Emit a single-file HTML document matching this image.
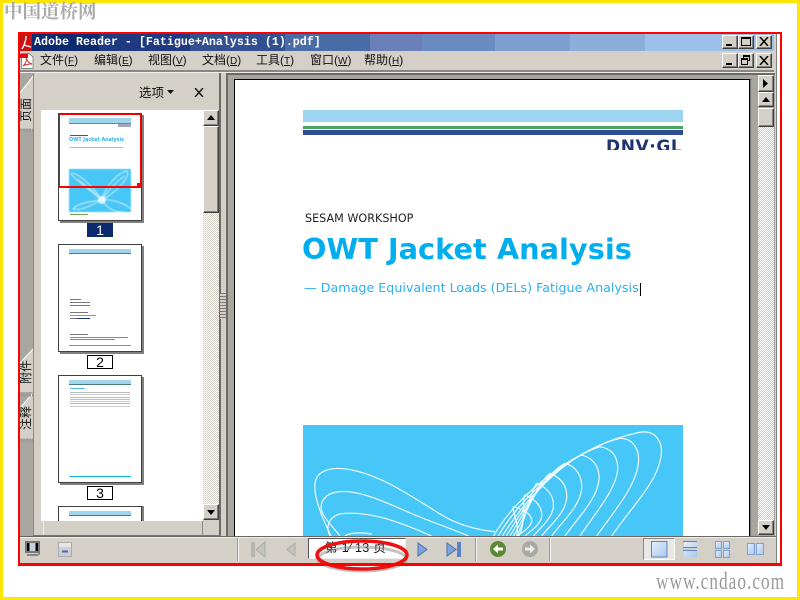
<!DOCTYPE html>
<html><head><meta charset="utf-8"><style>
html,body{margin:0;padding:0}
body{width:800px;height:600px;position:relative;overflow:hidden;background:#fff;font-family:"Liberation Sans","Noto Sans CJK SC",sans-serif}
div,span.a,svg.a{position:absolute;box-sizing:border-box}
.t{white-space:nowrap;line-height:1}
.btn{background:#d4d0c8;border:1px solid;border-color:#fff #404040 #404040 #fff;box-shadow:inset -1px -1px 0 #808080}
.chk{background-color:#fff;background-image:linear-gradient(45deg,#d4d0c8 25%,transparent 25%,transparent 75%,#d4d0c8 75%),linear-gradient(45deg,#d4d0c8 25%,transparent 25%,transparent 75%,#d4d0c8 75%);background-size:2px 2px;background-position:0 0,1px 1px}
.m{font-size:12px;color:#111;top:54px;font-family:"Liberation Sans","WenQuanYi Zen Hei","Noto Sans CJK SC",sans-serif}
.m u{font-size:10px}
.thumb{left:58px;width:84px;background:#fff;border:1px solid #404040;box-shadow:2px 2px 0 #808080}
.lab{left:87px;width:26px;height:14px;border:1px solid #000;background:#fff;font-size:14px;text-align:center;line-height:12px;color:#000}
.vt{left:6px;width:40px;height:14px;text-align:center;font-size:12px;color:#111;font-family:"WenQuanYi Zen Hei","Noto Sans CJK SC",sans-serif;line-height:14px;white-space:nowrap;transform:rotate(-90deg)}
</style></head><body>
<div style="left:0;top:0;width:800px;height:600px;border:3px solid #ffe600"></div>
<div class="t" style="left:4px;top:2px;font-size:18.5px;font-weight:700;color:#aaa;font-family:'Noto Serif CJK SC',serif">中国道桥网</div>
<div class="t" style="left:656px;top:570px;font-size:24px;color:#999;font-family:'Liberation Serif',serif;transform:scaleX(.72);transform-origin:0 0;letter-spacing:1.4px">www.cndao.com</div>

<!-- window -->
<div style="left:20px;top:34px;width:757px;height:530px;background:#d4d0c8;border-right:1px solid #808080;border-bottom:2px solid #808080"></div>
<!-- title -->
<div style="left:20px;top:34px;width:754px;height:17px;background:linear-gradient(90deg,#0d2a6e 0,#0d2a6e 79px,#1f3a80 79px,#1f3a80 170px,#324f90 170px,#324f90 265px,#4a6ca6 265px,#4a6ca6 350px,#6b7fb8 350px,#6b7fb8 402px,#6a8bc0 402px,#6a8bc0 475px,#7f9fd0 475px,#7f9fd0 550px,#8daed9 550px,#8daed9 625px,#9cc0ea 625px)"></div>
<svg class="a" style="left:20px;top:34px" width="12" height="17" viewBox="0 0 12 17"><rect width="12" height="17" fill="#c11"/><path d="M2 15C5 10 6 6 6 2M4 11L11 13" stroke="#fff" stroke-width="1.4" fill="none"/></svg>
<div class="t" style="left:34px;top:37px;font:bold 11.67px/1 'Liberation Mono',monospace;color:#fff">Adobe Reader - [Fatigue+Analysis (1).pdf]</div>
<div class="btn" style="left:722px;top:35px;width:16px;height:14px"></div>
<div style="left:726px;top:44px;width:6px;height:2px;background:#000"></div>
<div class="btn" style="left:738px;top:35px;width:16px;height:14px"></div>
<div style="left:741px;top:37px;width:10px;height:9px;border:1px solid #000;border-top-width:2px"></div>
<div class="btn" style="left:756px;top:35px;width:16px;height:14px"></div>
<svg class="a" style="left:759px;top:37px" width="10" height="9"><path d="M1 0L9 9M9 0L1 9" stroke="#000" stroke-width="1.5"/></svg>
<!-- menu -->
<svg class="a" style="left:20px;top:53px" width="14" height="16"><path d="M1.500 .5H9L13 4V15.500H1.500Z" fill="#fff" stroke="#888"/><path d="M0 1H8V5H0Z" fill="#d11"/><path d="M3 13C6 10 7 7 6 5C8 9 9 10 12 11C9 11 6 11 3 13Z" fill="none" stroke="#c33"/></svg>
<div class="t m" style="left:40px">文件(<u>F</u>)</div>
<div class="t m" style="left:94px">编辑(<u>E</u>)</div>
<div class="t m" style="left:148px">视图(<u>V</u>)</div>
<div class="t m" style="left:202px">文档(<u>D</u>)</div>
<div class="t m" style="left:256px">工具(<u>T</u>)</div>
<div class="t m" style="left:310px">窗口(<u>W</u>)</div>
<div class="t m" style="left:364px">帮助(<u>H</u>)</div>
<div class="btn" style="left:722px;top:53px;width:16px;height:15px"></div>
<div style="left:726px;top:63px;width:6px;height:2px;background:#000"></div>
<div class="btn" style="left:738px;top:53px;width:16px;height:15px"></div>
<div style="left:743px;top:55px;width:7px;height:6px;border:1px solid #000;border-top-width:2px"></div>
<div style="left:741px;top:58px;width:7px;height:7px;border:1px solid #000;border-top-width:2px;background:#d4d0c8"></div>
<div class="btn" style="left:756px;top:53px;width:16px;height:15px"></div>
<svg class="a" style="left:759px;top:56px" width="10" height="9"><path d="M1 0L9 9M9 0L1 9" stroke="#000" stroke-width="1.500"/></svg>
<div style="left:20px;top:70px;width:754px;height:2px;background:#8a8880"></div>
<div style="left:20px;top:72px;width:754px;height:1px;background:#eee"></div>

<!-- left strip -->
<div style="left:20px;top:73px;width:13px;height:463px;background:#a8a69f"></div>
<svg class="a" style="left:20px;top:73px" width="14" height="60"><path d="M0 20L14 2V56H0Z" fill="#d4d0c8"/><path d="M0 20L14 2" stroke="#fff"/><path d="M0 57H13" stroke="#999" stroke-dasharray="2 1" stroke-width="3"/></svg>
<svg class="a" style="left:20px;top:345px" width="14" height="100"><path d="M0 18L14 3V47H0Z" fill="#d4d0c8"/><path d="M0 63L14 47V94H0Z" fill="#d4d0c8"/><path d="M0 18L14 3M0 63L14 47" stroke="#fff"/><path d="M0 50H13M0 95H13" stroke="#999" stroke-dasharray="2 1" stroke-width="3"/></svg>
<div class="t vt" style="top:103px">页面</div>
<div class="t vt" style="top:365px">附件</div>
<div class="t vt" style="top:411px">注释</div>
<!-- left panel -->
<div style="left:33px;top:73px;width:187px;height:463px;background:#d4d0c8;border-left:1px solid #8a8880"></div>
<div style="left:219px;top:73px;width:2px;height:463px;background:#6b6a66"></div>
<div class="t" style="left:139px;top:86px;font-size:12.500px;color:#111;font-family:'WenQuanYi Zen Hei','Noto Sans CJK SC',sans-serif">选项</div>
<svg class="a" style="left:167px;top:90px" width="8" height="5"><path d="M0 0H7L3.500 4Z" fill="#111"/></svg>
<svg class="a" style="left:194px;top:88px" width="10" height="9"><path d="M1 0L9 9M9 0L1 9" stroke="#111" stroke-width="1.400"/></svg>
<div style="left:41px;top:110px;width:162px;height:411px;background:#fff;overflow:hidden"></div>
<div class="chk" style="left:203px;top:110px;width:16px;height:410px"></div>
<div class="btn" style="left:203px;top:110px;width:16px;height:16px"></div>
<svg class="a" style="left:207px;top:115px" width="9" height="5"><path d="M0 5H8L4 0Z"/></svg>
<div class="btn" style="left:203px;top:126px;width:16px;height:87px"></div>
<div class="btn" style="left:203px;top:504px;width:16px;height:16px"></div>
<svg class="a" style="left:207px;top:510px" width="9" height="5"><path d="M0 0H8L4 5Z"/></svg>
<div style="left:43px;top:521px;width:160px;height:15px;background:#d4d0c8;border-right:1px solid #888;border-left:1px solid #eee"></div>
<div style="left:33px;top:535px;width:187px;height:1px;background:#777"></div>

<!-- thumb 1 -->
<div class="thumb" style="top:113px;height:108px"></div>
<div style="left:69px;top:118px;width:62px;height:5px;background:#9fd6ee"></div>
<div style="left:69px;top:123px;width:62px;height:1px;background:#4d9a7d"></div>
<div style="left:118px;top:124px;width:13px;height:3px;background:#a4a8ba"></div>
<div style="left:70px;top:135px;width:18px;height:1px;background:#555"></div>
<div class="t" style="left:69px;top:139px;font:bold 4.800px/1 'DejaVu Sans',sans-serif;color:#2ab3ee">OWT Jacket Analysis</div>
<div style="left:70px;top:147px;width:53px;height:1px;background:#7fcdf2"></div>
<svg class="a" style="left:69px;top:169px;filter:blur(.4px)" width="62" height="43" viewBox="0 0 62 43"><rect width="62" height="43" fill="#48c6f5"/><g fill="none" stroke="#b5e6fa" stroke-width="1.200"><path d="M33 31C24 24 6 10 2 5C4 1 20 12 33 31ZM33 31C36 18 48 4 58 2C62 8 46 24 33 31ZM33 31C36 36 42 43 54 43M33 31C26 34 14 42 4 40C8 34 24 32 33 31Z"/><path d="M33 31C26 24 14 14 8 10M33 31C40 20 50 10 56 7M33 31C42 30 56 34 62 40"/></g><circle cx="33" cy="31" r="4" fill="#fff" opacity=".75"/></svg>
<div style="left:70px;top:214px;width:18px;height:1px;background:#7a9a4a"></div>
<div style="left:59px;top:114px;width:82px;height:74px;border:1px solid #f00;border-width:1px 1px 2px 1px"></div>
<div style="left:137px;top:183px;width:4px;height:4px;background:#f00"></div>
<div class="lab" style="top:223px;background:#0d2a6e;color:#fff;border-color:#0d2a6e">1</div>

<!-- thumb 2 -->
<div class="thumb" style="top:244px;height:108px"></div>
<div style="left:69px;top:249px;width:62px;height:4px;background:#9fd6ee"></div>
<div style="left:69px;top:253px;width:62px;height:1px;background:#4d7a7d"></div>
<div style="left:70px;top:299px;width:11px;height:1px;background:#777"></div>
<div style="left:70px;top:302px;width:20px;height:1px;background:#777"></div>
<div style="left:70px;top:305px;width:20px;height:1px;background:#777"></div>
<div style="left:70px;top:312px;width:18px;height:1px;background:#777"></div>
<div style="left:70px;top:315px;width:26px;height:1px;background:#7a9ad0"></div>
<div style="left:70px;top:318px;width:10px;height:1px;background:#777"></div>
<div style="left:77px;top:318px;width:13px;height:1px;background:#1c3a8c"></div>
<div style="left:70px;top:334px;width:18px;height:1px;background:#777"></div>
<div style="left:70px;top:337px;width:58px;height:1px;background:#888"></div>
<div style="left:70px;top:339px;width:45px;height:1px;background:#888"></div>
<div style="left:69px;top:345px;width:62px;height:1px;background:#2aa8e8"></div>
<div class="lab" style="top:355px">2</div>

<!-- thumb 3 -->
<div class="thumb" style="top:375px;height:108px"></div>
<div style="left:69px;top:380px;width:62px;height:4px;background:#9fd6ee"></div>
<div style="left:69px;top:384px;width:62px;height:1px;background:#4d7a7d"></div>
<div style="left:70px;top:388px;width:15px;height:1px;background:#4cb8ee"></div>
<div style="left:70px;top:392px;width:60px;height:1px;background:#bbb"></div>
<div style="left:70px;top:394px;width:60px;height:1px;background:#ccc"></div>
<div style="left:70px;top:397px;width:60px;height:1px;background:#bbb"></div>
<div style="left:70px;top:399px;width:60px;height:1px;background:#bbb"></div>
<div style="left:70px;top:401px;width:60px;height:1px;background:#ccc"></div>
<div style="left:70px;top:403px;width:60px;height:1px;background:#bbb"></div>
<div style="left:70px;top:406px;width:60px;height:1px;background:#ccc"></div>
<div style="left:69px;top:476px;width:62px;height:1px;background:#12b4f0"></div>
<div class="lab" style="top:486px">3</div>
<!-- thumb 4 -->
<div style="left:58px;top:506px;width:84px;height:15px;background:#fff;border:1px solid #404040;border-bottom:0;box-shadow:2px 0 0 #808080"></div>
<div style="left:69px;top:511px;width:62px;height:4px;background:#9fd6ee"></div>
<div style="left:69px;top:515px;width:62px;height:1px;background:#4d7a7d"></div>

<!-- splitter -->
<div style="left:221px;top:73px;width:5px;height:463px;background:#d4d0c8"></div>
<div style="left:220px;top:293px;width:6px;height:26px;background:repeating-linear-gradient(180deg,#777 0,#777 1px,#d4d0c8 1px,#d4d0c8 3px)"></div>

<!-- doc area -->
<div style="left:226px;top:73px;width:549px;height:463px;background:#a8a69f;border-left:2px solid #6b6a66;border-top:2px solid #6b6a66"></div>
<div style="left:234px;top:79px;width:516px;height:457px;background:#fff;border-top:1px solid #000;border-left:1px solid #000;border-right:1px solid #000;box-shadow:2px 0 0 #777"></div>
<div style="left:303px;top:110px;width:380px;height:12px;background:#9ed6f1"></div>
<div style="left:303px;top:125.500px;width:380px;height:3px;background:#4ba35f"></div>
<div style="left:303px;top:130px;width:380px;height:5px;background:#2e4c90"></div>
<div style="left:600px;top:139px;width:83px;height:11px;overflow:hidden"><div class="t" style="left:6px;top:0;font:bold 17px/1 'DejaVu Sans',sans-serif;color:#1d3371;letter-spacing:.6px;white-space:nowrap">DNV·GL</div></div>
<div class="t" style="left:305px;top:213px;font:11.200px/1 'DejaVu Sans',sans-serif;color:#222;">SESAM WORKSHOP</div>
<div class="t" style="left:302px;top:235px;font:bold 28.800px/1 'DejaVu Sans',sans-serif;color:#00aeef">OWT Jacket Analysis</div>
<div class="t" style="left:304px;top:282px;font:12.700px/1 'DejaVu Sans',sans-serif;color:#2ab0ee;">— Damage Equivalent Loads (DELs) Fatigue Analysis</div>
<div style="left:640px;top:283px;width:1px;height:13px;background:#000"></div>
<svg class="a" style="left:303px;top:425px" width="380" height="111" viewBox="0 0 1140 333"><rect width="1140" height="333" fill="#46c7f7"/><g fill="none" stroke="#f2fbff" stroke-width="3.500" transform="translate(-24,-15)">
<path d="M108 348C80 290 55 230 60 190C65 150 110 140 160 148C260 165 350 230 440 285C490 315 550 330 600 335"/>
<path d="M135 348C105 310 70 280 80 250C90 220 120 212 160 215C220 220 300 260 360 285C420 310 480 330 520 348"/>
<path d="M105 348C92 320 100 295 130 283C170 275 220 282 270 295C320 310 370 330 410 348"/>
<path d="M150 348C160 340 190 335 230 342"/>
<path d="M596 348C660 230 850 70 1040 36C1085 32 1105 70 1098 110C1085 190 1010 260 950 348"/>
<path d="M610 348C670 240 830 90 975 55C1015 55 1035 90 1030 130C1022 200 960 270 905 348"/>
<path d="M622 348C680 255 800 115 915 80C950 85 970 110 968 150C962 210 900 280 855 348"/>
<path d="M634 348C685 265 770 140 860 105C895 115 915 140 912 180C905 240 850 290 810 348"/>
<path d="M645 348C690 275 745 165 810 130C845 140 862 170 860 205C855 260 805 300 770 348"/>
<path d="M655 348C695 285 725 190 765 160C800 175 818 200 815 235C810 280 770 310 740 348"/>
<path d="M665 348C695 295 705 215 725 190C760 205 778 230 775 262C770 295 740 320 715 348"/>
<path d="M672 348C695 300 680 240 690 225C725 240 742 262 740 290C735 315 710 330 690 348"/>
<path d="M665 348C675 315 650 270 655 260C690 270 712 285 710 305C706 322 685 335 665 348"/>
</g></svg>

<!-- doc scrollbar -->
<div style="left:751px;top:80px;width:7px;height:456px;background:#a8a69f"></div>
<div class="chk" style="left:758px;top:108px;width:16px;height:412px"></div>
<div class="btn" style="left:758px;top:75px;width:16px;height:17px"></div>
<svg class="a" style="left:763px;top:79px" width="6" height="10"><path d="M0 0V9L5 4.500Z"/></svg>
<div class="btn" style="left:758px;top:92px;width:16px;height:15px"></div>
<svg class="a" style="left:762px;top:97px" width="9" height="5"><path d="M0 5H8L4 0Z"/></svg>
<div class="btn" style="left:758px;top:108px;width:16px;height:19px"></div>
<div class="btn" style="left:758px;top:520px;width:16px;height:15px"></div>
<svg class="a" style="left:762px;top:525px" width="9" height="5"><path d="M0 0H8L4 5Z"/></svg>

<!-- bottom toolbar -->
<div style="left:20px;top:536px;width:756px;height:1px;background:#666"></div>
<div style="left:20px;top:537px;width:756px;height:26px;background:#d4d0c8;border-top:1px solid #eee"></div>
<svg class="a" style="left:25px;top:541px" width="16" height="16"><rect x="0" y="0" width="15" height="12" fill="#777"/><rect x="2" y="2" width="11" height="8" fill="#000"/><rect x="4.500" y="2" width="6" height="8" fill="#c8d0dc"/><rect x="2" y="13" width="11" height="2" fill="#888"/><rect x="13" y="12" width="2" height="2" fill="#6a6"/></svg>
<svg class="a" style="left:58px;top:542px" width="14" height="15"><rect x=".5" y=".5" width="13" height="14" fill="#e6e6e6" stroke="#aaa"/><rect x="1" y="5" width="12" height="9" fill="#ccd"/><rect x="4" y="8.500" width="6" height="2" fill="#4a6ca6"/></svg>
<div style="left:238px;top:538px;width:1px;height:23px;background:#f4f4f4;box-shadow:-1px 0 0 #999"></div>
<svg class="a" style="left:250px;top:541px" width="17" height="17"><rect x="1" y="1" width="4" height="15" fill="#b5b5b0"/><path d="M15 1V16L6 8.500Z" fill="#c4c4bf" stroke="#aaa"/></svg>
<svg class="a" style="left:285px;top:541px" width="12" height="17"><path d="M10 2V15L2 8.500Z" fill="#c4c4bf" stroke="#aaa"/></svg>
<div style="left:308px;top:538px;width:98px;height:21px;background:#fff;border:1px solid #555;border-right-color:#eee;border-bottom-color:#eee"></div>
<div class="t" style="left:325px;top:542px;font-size:12.500px;letter-spacing:.3px;color:#111;font-family:'Liberation Sans','WenQuanYi Zen Hei','Noto Sans CJK SC',sans-serif;">第 1⁄ 13 页</div>
<svg class="a" style="left:310px;top:534px" width="105" height="44"><ellipse cx="52" cy="25" rx="44" ry="12" fill="none" stroke="#888" stroke-width="3" opacity=".5"/><ellipse cx="52" cy="21" rx="45" ry="14" fill="none" stroke="#f01010" stroke-width="3.500"/></svg>
<svg class="a" style="left:417px;top:541px" width="12" height="17"><path d="M1 2V15L10 8.500Z" fill="#7ea4d8" stroke="#4a70b0"/></svg>
<svg class="a" style="left:446px;top:541px" width="17" height="17"><path d="M1 2V15L10 8.500Z" fill="#7ea4d8" stroke="#4a70b0"/><rect x="11" y="1" width="4" height="15" fill="#5a84c4"/></svg>
<div style="left:476px;top:538px;width:1px;height:23px;background:#f4f4f4;box-shadow:-1px 0 0 #999"></div>
<svg class="a" style="left:489px;top:540px" width="18" height="18"><circle cx="9" cy="9" r="8" fill="#5c8a34"/><path d="M4 9L9 4.500V7.500H14V10.500H9V13.500Z" fill="#fff"/></svg>
<svg class="a" style="left:521px;top:540px" width="18" height="18"><circle cx="9" cy="9" r="8" fill="#a8a8a4"/><path d="M14 9L9 4.500V7.500H4V10.500H9V13.500Z" fill="#ececec"/></svg>
<div style="left:550px;top:538px;width:1px;height:23px;background:#f4f4f4;box-shadow:-1px 0 0 #999"></div>
<div style="left:643px;top:538px;width:32px;height:22px;background:#e8e7e3;border:1px solid;border-color:#888 #fff #fff #888"></div>
<svg class="a" style="left:651px;top:541px" width="17" height="17"><defs><linearGradient id="g" x1="0" y1="0" x2="1" y2="1"><stop offset="0" stop-color="#e6f0fb"/><stop offset="1" stop-color="#a8c6ea"/></linearGradient></defs><rect x=".5" y=".5" width="15.500" height="15.500" fill="url(#g)" stroke="#5c84c4"/></svg>
<svg class="a" style="left:683px;top:541px" width="16" height="17"><path d="M1 1H14V6H1ZM1 10H14V16H1Z" fill="url(#g)"/><path d="M0 .5H14M0 6.500H14M0 9.500H14" stroke="#5c84c4"/></svg>
<svg class="a" style="left:715px;top:541px" width="16" height="17"><g fill="url(#g)" stroke="#7da0d4"><rect x=".5" y=".5" width="6" height="7"/><rect x="8.500" y=".5" width="6" height="7"/><rect x=".5" y="9.500" width="6" height="7"/><rect x="8.500" y="9.500" width="6" height="7"/></g></svg>
<svg class="a" style="left:747px;top:543px" width="17" height="13"><g fill="url(#g)" stroke="#7da0d4"><rect x=".5" y=".5" width="7" height="11"/><rect x="9.500" y=".5" width="7" height="11"/></g></svg>

<!-- red rect -->
<div style="left:18px;top:32px;width:764px;height:534px;border:2px solid #f00;border-bottom-width:3px"></div>
</body></html>
